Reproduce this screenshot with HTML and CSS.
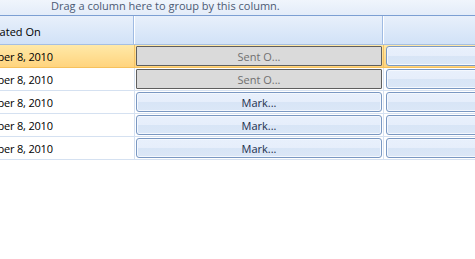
FILE: index.html
```html
<!DOCTYPE html>
<html>
<head>
<meta charset="utf-8">
<link rel="stylesheet" href="styles.css">
</head>
<body>
<div class="grid">
  <div class="group-panel">Drag a column here to group by this column.</div>
  <div class="viewport">
    <div class="table">
      <div class="row header">
        <div class="cell c1"><span class="hdr-text">Created On</span></div>
        <div class="cell c2"></div>
        <div class="cell c3"></div>
      </div>
      <div class="row selected">
        <div class="cell c1"><span class="date">October 8, 2010</span></div>
        <div class="cell c2"><button class="btn disabled">Sent O...</button></div>
        <div class="cell c3"><button class="btn"></button></div>
      </div>
      <div class="row">
        <div class="cell c1"><span class="date">October 8, 2010</span></div>
        <div class="cell c2"><button class="btn disabled">Sent O...</button></div>
        <div class="cell c3"><button class="btn"></button></div>
      </div>
      <div class="row">
        <div class="cell c1"><span class="date">October 8, 2010</span></div>
        <div class="cell c2"><button class="btn">Mark...</button></div>
        <div class="cell c3"><button class="btn"></button></div>
      </div>
      <div class="row">
        <div class="cell c1"><span class="date">October 8, 2010</span></div>
        <div class="cell c2"><button class="btn">Mark...</button></div>
        <div class="cell c3"><button class="btn"></button></div>
      </div>
      <div class="row">
        <div class="cell c1"><span class="date">October 8, 2010</span></div>
        <div class="cell c2"><button class="btn">Mark...</button></div>
        <div class="cell c3"><button class="btn"></button></div>
      </div>
    </div>
  </div>
</div>
</body>
</html>
```
FILE: styles.css
```css
html, body {
  margin: 0;
  padding: 0;
  background: #ffffff;
  width: 475px;
  height: 259px;
  overflow: hidden;
  font-family: "Open Sans", "DejaVu Sans", sans-serif;
  font-size: 11px;
}

.grid {
  width: 475px;
  overflow: hidden;
}

.group-panel {
  height: 15px;
  line-height: 12px;
  padding-left: 51px;
  color: #4c5a74;
  background: linear-gradient(#f0f5fc, #e3ecf9);
  border-bottom: 1px solid #7c9fd3;
  white-space: nowrap;
}

.viewport {
  width: 475px;
  overflow: hidden;
}

.table {
  margin-left: -32px;
  width: 700px;
}

.row {
  display: flex;
  height: 22px;
  border-bottom: 1px solid #d5e1f1;
  background: #ffffff;
}

.row.header {
  height: 28px;
  border-bottom: 1px solid #a5bfe2;
  background: linear-gradient(#e8f0fb, #d1e2f7);
}

.row.selected {
  background: linear-gradient(#ffe9a8, #ffd47e);
  border-bottom: 1px solid #f6c15c;
}

.cell {
  box-sizing: border-box;
  height: 100%;
  display: flex;
  align-items: center;
  white-space: nowrap;
}

.c1 {
  width: 167px;
  padding-left: 6px;
  border-right: 1px solid #d5e1f1;
  color: #000000;
}

.date {
  letter-spacing: -0.2px;
}

.header .c1,
.header .c2 {
  border-right: 1px solid #ffffff;
  box-shadow: inset -1px 0 0 #9fbbe3;
}

.hdr-text {
  margin-left: 8px;
  padding-top: 2px;
}

.c2 {
  width: 249px;
  padding: 1px 1px 1px 1px;
  border-right: 1px solid #d5e1f1;
}

.selected .c1,
.selected .c2 {
  border-right-color: #f3c366;
}

.c3 {
  flex: 1;
  padding: 1px 0 1px 2px;
}

.btn {
  box-sizing: border-box;
  width: 100%;
  height: 20px;
  margin: 0;
  padding: 0;
  font-family: "Open Sans", "DejaVu Sans", sans-serif;
  font-size: 11px;
  color: #1d2f4d;
  border: 1px solid #7a98c2;
  border-radius: 3px;
  background: linear-gradient(#e8f0fc 0%, #e6eefb 50%, #d8e5f6 51%, #dbe7f7 100%);
  box-shadow: inset 0 0 0 1px #f4f8fe;
  line-height: 17px;
}

.btn.disabled {
  color: #707070;
  border: 1px solid #5e5e5e;
  border-radius: 1px;
  background: #dadada;
  box-shadow: none;
}
```
